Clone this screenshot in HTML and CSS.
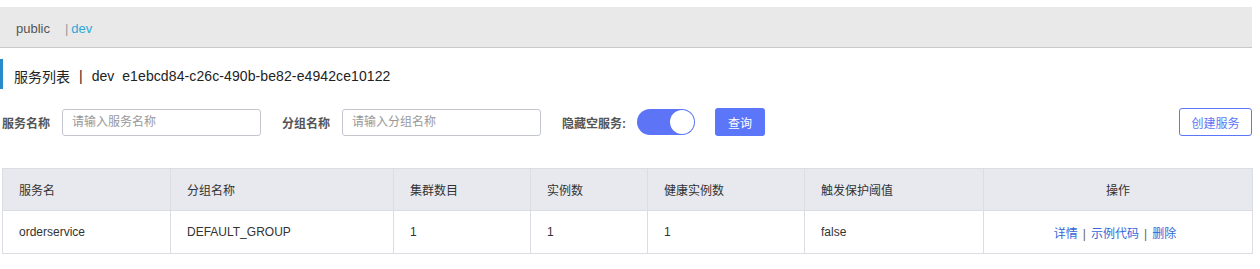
FILE: index.html
```html
<!DOCTYPE html>
<html lang="zh-CN">
<head>
    <meta charset="UTF-8">
    <title>服务列表</title>
    <link rel="stylesheet" href="styles.css">
</head>
<body>
<div id="page">
    <div class="ns-bar">
        <span class="ns-item">public</span>
        <span class="ns-sep">|</span><span class="ns-item ns-cur">dev</span>
    </div>

    <div class="page-title">
        <span>服务列表</span>
        <span class="title-sep">|</span>
        <span>dev</span>
        <span class="title-id">e1ebcd84-c26c-490b-be82-e4942ce10122</span>
    </div>

    <div class="search-bar">
        <label class="s-label">服务名称</label>
        <input class="s-input" type="text" placeholder="请输入服务名称">
        <label class="s-label s-gap">分组名称</label>
        <input class="s-input" type="text" placeholder="请输入分组名称">
        <label class="s-label s-gap">隐藏空服务:</label>
        <span class="switch"><i></i></span>
        <button class="btn-primary">查询</button>
        <button class="btn-outline">创建服务</button>
    </div>

    <table class="svc-table">
        <thead>
        <tr>
            <th class="c1">服务名</th>
            <th class="c2">分组名称</th>
            <th class="c3">集群数目</th>
            <th class="c4">实例数</th>
            <th class="c5">健康实例数</th>
            <th class="c6">触发保护阈值</th>
            <th class="c7 center">操作</th>
        </tr>
        </thead>
        <tbody>
        <tr>
            <td>orderservice</td>
            <td>DEFAULT_GROUP</td>
            <td>1</td>
            <td>1</td>
            <td>1</td>
            <td>false</td>
            <td class="center ops">
                <a href="#">详情</a><span class="op-sep">|</span><a href="#">示例代码</a><span class="op-sep">|</span><a href="#">删除</a>
            </td>
        </tr>
        </tbody>
    </table>
</div>
</body>
</html>
```

FILE: styles.css
```css
*{
    margin: 0;
    padding: 0;
    box-sizing: border-box;
}
body{
    font-family: "Liberation Sans", "Noto Sans CJK SC", sans-serif;
    color: #333;
    background: #fff;
}
a{
    text-decoration: none;
}
#page{
    width: 1252px;
    padding-top: 7px;
}
.ns-bar{
    height: 41px;
    background: #e9e9e9;
    border-bottom: 1px solid #c9c9c9;
    display: flex;
    align-items: center;
    padding-left: 16px;
    padding-top: 3px;
    font-size: 13px;
    color: #555;
}
.ns-sep{
    margin-left: 15px;
    margin-right: 3px;
    color: #999;
}
.ns-cur{
    color: #2fa8d8;
}
.page-title{
    margin-top: 11px;
    height: 30px;
    border-left: 3px solid #2a8bcb;
    padding-left: 11px;
    padding-top: 4px;
    display: flex;
    align-items: center;
    font-size: 14px;
    color: #222;
}
.title-sep{
    margin: 0 9px;
}
.title-id{
    margin-left: 8px;
    letter-spacing: 0.1px;
}
.search-bar{
    margin-top: 19px;
    display: flex;
    align-items: center;
    height: 28px;
    padding-left: 2px;
}
.s-label{
    font-size: 12px;
    font-weight: bold;
    color: #555;
    margin-right: 12px;
}
.s-gap{
    margin-left: 21px;
}
.s-input{
    width: 199px;
    height: 27px;
    border: 1px solid #c4c6cf;
    border-radius: 3px;
    padding-left: 9px;
    font-size: 12px;
    font-family: inherit;
    color: #333;
    outline: none;
}
.s-input::placeholder{
    color: #999;
}
.switch{
    width: 58px;
    height: 26px;
    border-radius: 13px;
    background: #5d74f7;
    display: flex;
    align-items: center;
    justify-content: flex-end;
    padding-right: 1px;
    margin-left: -1px;
}
.switch i{
    width: 24px;
    height: 24px;
    border-radius: 50%;
    background: #fff;
}
.btn-primary{
    margin-left: 20px;
    width: 50px;
    height: 28px;
    border: 0;
    border-radius: 3px;
    background: #5b76f8;
    color: #fff;
    font-size: 12px;
    font-family: inherit;
}
.btn-outline{
    margin-left: auto;
    width: 73px;
    height: 28px;
    border: 1px solid #5b76f8;
    border-radius: 3px;
    background: #fff;
    color: #5b76f8;
    font-size: 12px;
    font-family: inherit;
}
.svc-table{
    margin-top: 32px;
    margin-left: 2px;
    width: 1250px;
    border-collapse: collapse;
    table-layout: fixed;
    font-size: 12px;
}
.svc-table th, .svc-table td{
    border: 1px solid #dcdde2;
    text-align: left;
    padding-left: 16px;
    font-weight: normal;
}
.svc-table th{
    height: 42px;
    background: #e8e9ee;
    color: #333;
}
.svc-table td{
    height: 43px;
    color: #333;
}
.svc-table .center{
    text-align: center;
    padding-left: 0;
}
.svc-table .ops{
    padding-right: 6px;
}
.c1{ width: 168px; }
.c2{ width: 223px; }
.c3{ width: 137px; }
.c4{ width: 117px; }
.c5{ width: 157px; }
.c6{ width: 179px; }
.c7{ width: 269px; }
.svc-table a{
    color: #3467d6;
}
.op-sep{
    color: #666;
    margin: 0 5px;
}
```
